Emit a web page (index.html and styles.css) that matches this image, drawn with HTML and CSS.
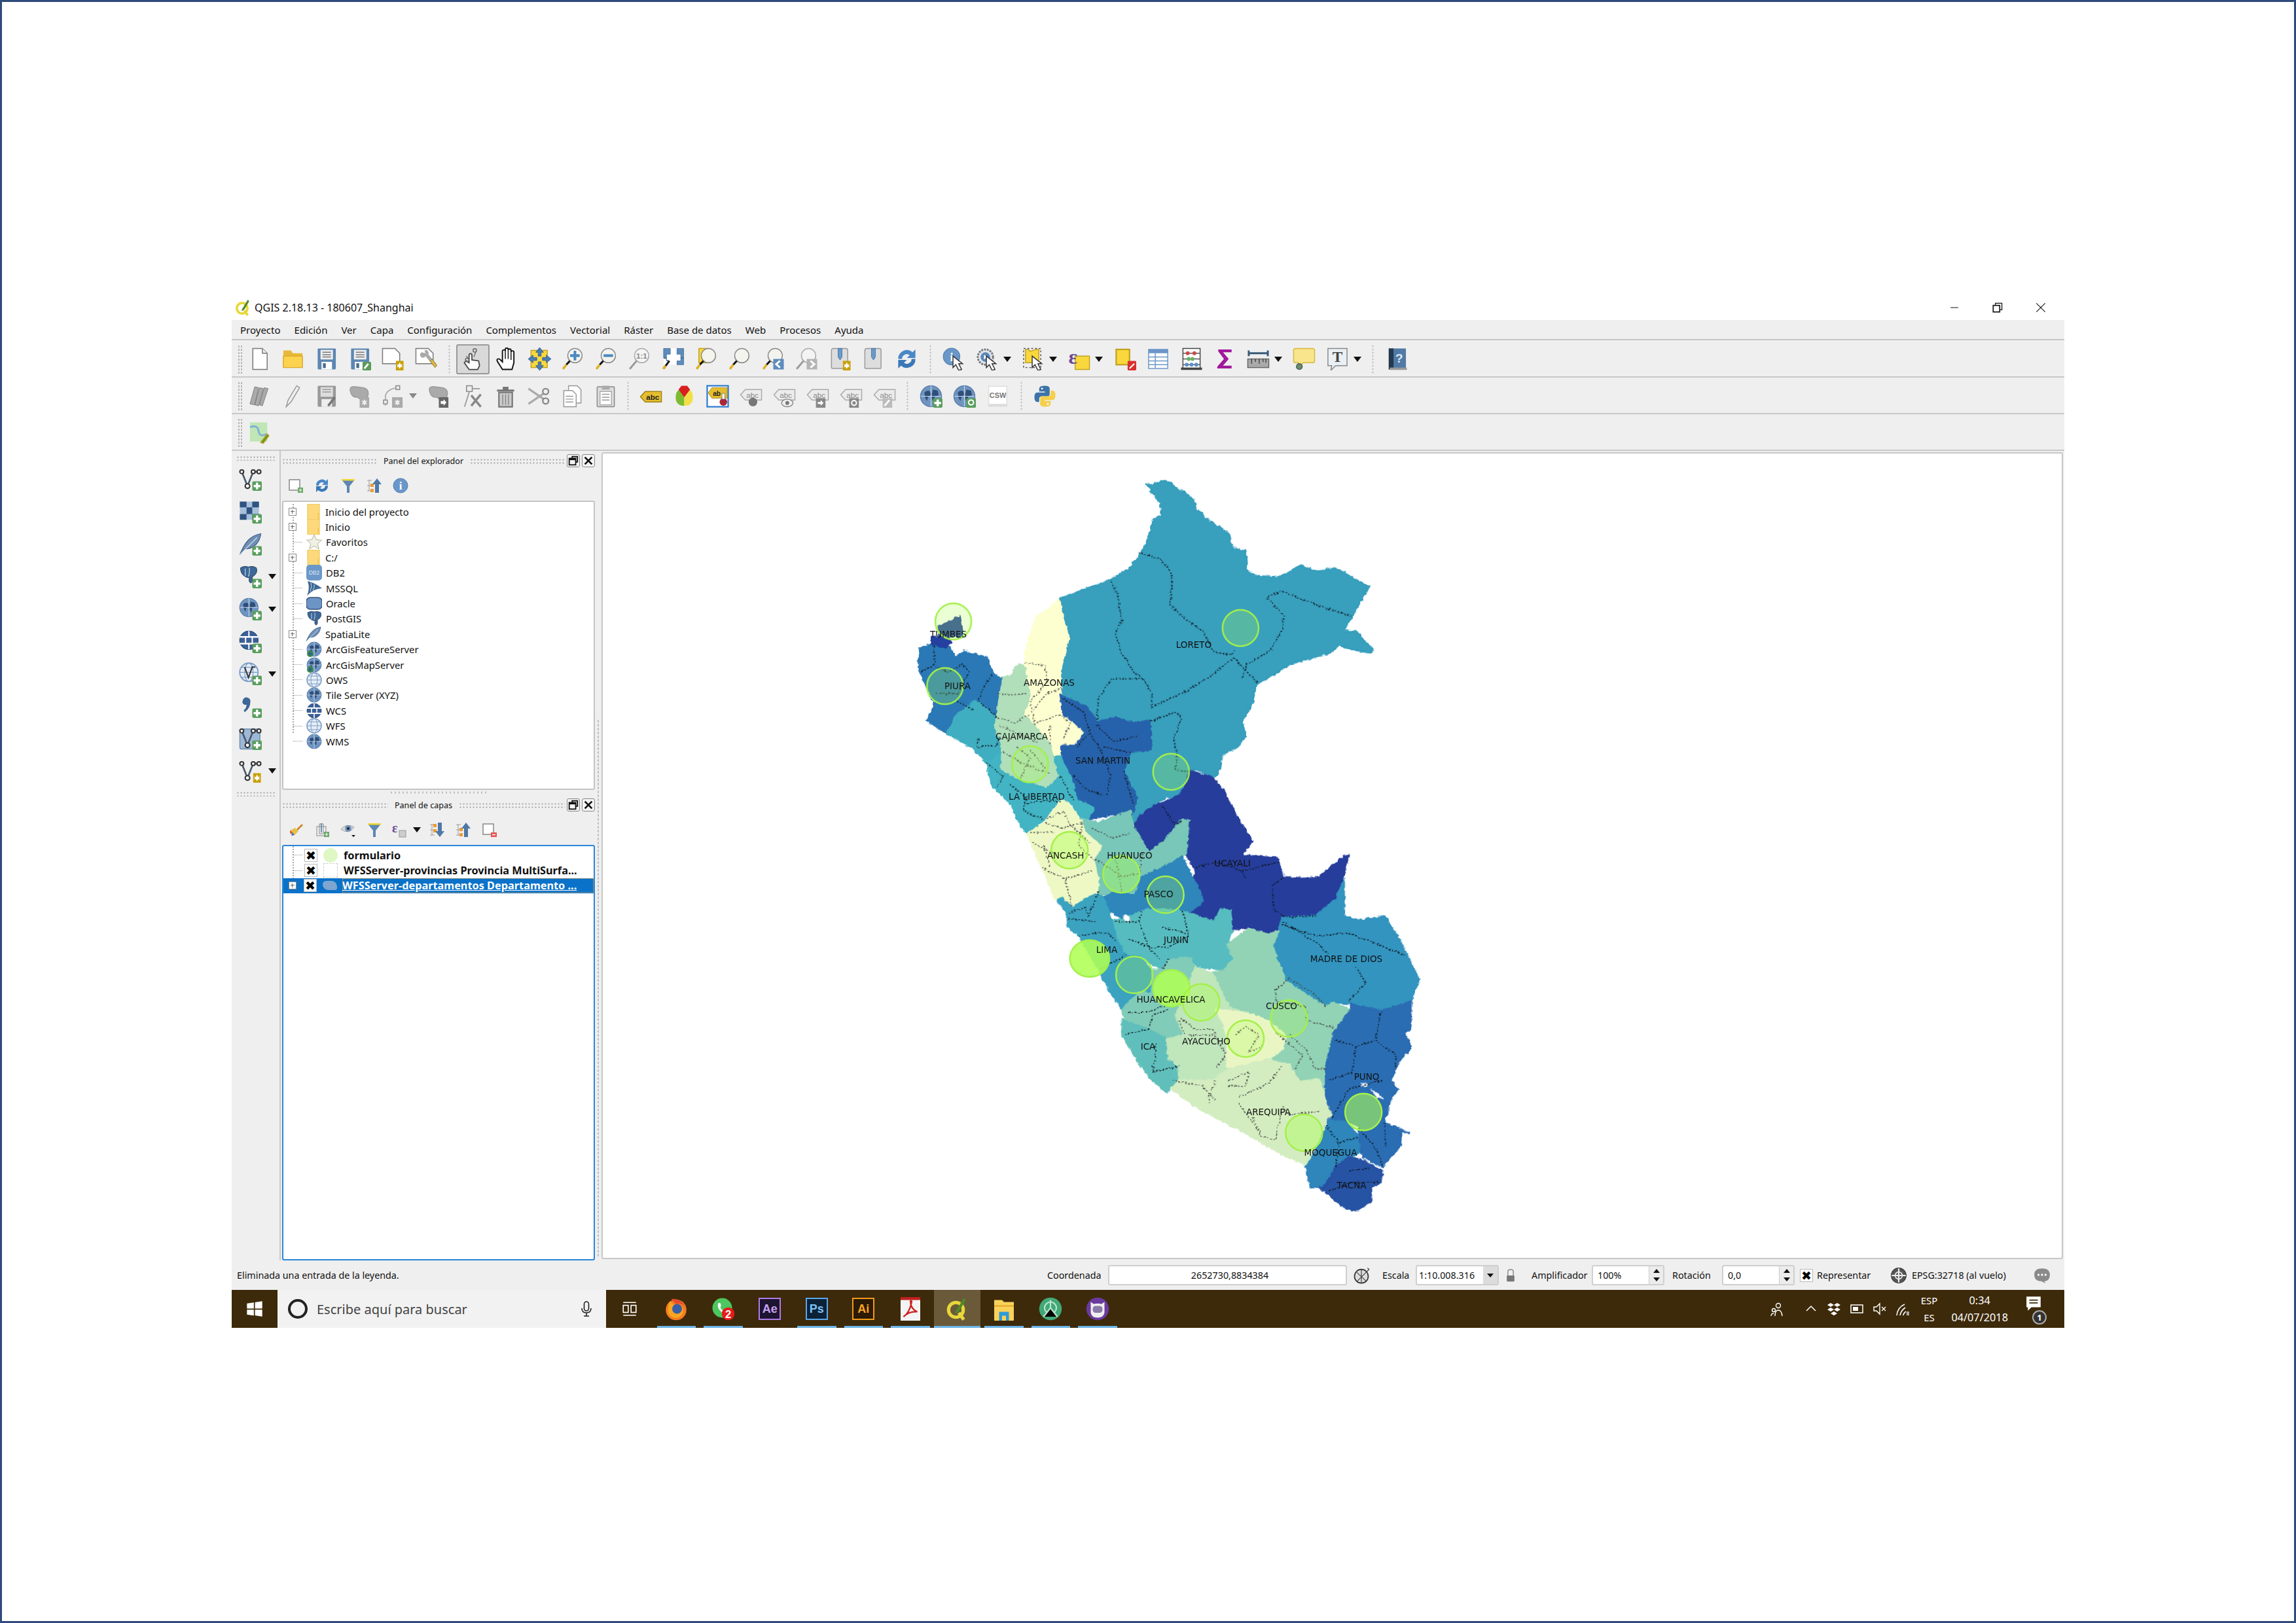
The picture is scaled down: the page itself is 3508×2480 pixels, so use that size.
FILE: index.html

```html
<!DOCTYPE html>
<html lang="es">
<head>
  <meta charset="UTF-8">
  <title>QGIS 2.18.13 - 180607_Shanghai</title>
  <link rel="stylesheet" href="styles.css">
</head>
<body>

<svg class="sprite" xmlns="http://www.w3.org/2000/svg">
  <defs>
    <!-- shared parts -->
    <symbol id="p-plus" viewBox="0 0 24 24"><rect x="14" y="14" width="10" height="10" rx="1.5" fill="#5a9e5e"/><path d="M19 15.5v7M15.5 19h7" stroke="#fff" stroke-width="2.4"/></symbol>
    <symbol id="p-star" viewBox="0 0 24 24"><rect x="15" y="14" width="8" height="10" fill="#c9a008"/><path d="M19 15.5l1.2 2.5 2-.5-1.2 1.5 1.2 1.7-2-.5-1.200 2.300-1.200-2.300-2 .5 1.200-1.700-1.200-1.500 2 .5z" fill="#fff"/></symbol>
    <symbol id="p-mag" viewBox="0 0 24 24"><circle cx="14" cy="8.500" r="7.500" fill="#f4f4ee" stroke="#8a8a8a"/><path d="M8.700 14 L5 18" stroke="#111" stroke-width="2"/><path d="M5 18 L1.500 22.500" stroke="#e0b020" stroke-width="2.400"/></symbol>
    <symbol id="p-magg" viewBox="0 0 24 24"><circle cx="14" cy="8.500" r="7.500" fill="#f4f4f4" stroke="#aaa"/><path d="M8.700 14 L1.500 22.500" stroke="#999" stroke-width="2"/></symbol>
    <symbol id="p-globe" viewBox="0 0 24 24"><circle cx="12" cy="12" r="11" fill="#6f94c0" stroke="#5a7fad"/><path d="M5 8q3-3 6-1l1 4-3 1-1 5-2-3zM14 5l5 1 1 5-4 1-1 6-2-3v-5z" fill="#2f4f78"/><path d="M1.500 12h21M12 1v22" stroke="#c8d8ec" stroke-width=".8"/></symbol>
    <symbol id="p-globel" viewBox="0 0 24 24"><circle cx="12" cy="12" r="11" fill="#e4edf7" stroke="#7c9cc4" stroke-width="1.500"/><ellipse cx="12" cy="12" rx="5" ry="11" fill="none" stroke="#7c9cc4"/><path d="M1 12h22M3 6h18M3 18h18" stroke="#7c9cc4"/></symbol>
    <symbol id="p-globed" viewBox="0 0 24 24"><circle cx="12" cy="12" r="11" fill="#3c6096" stroke="#2c4c7c"/><path d="M1 8h22M1 16h22" stroke="#fff" stroke-width="2"/><path d="M8 8v8M16 8v8M12 1v7M12 16v7" stroke="#fff" stroke-width="1.600"/></symbol>
    <symbol id="p-v" viewBox="0 0 24 24"><path d="M3 4l6 15 6-15h7" fill="none" stroke="#4a5a6a" stroke-width="1.800"/><g fill="#fff" stroke="#333" stroke-width="1.400"><circle cx="3" cy="4" r="2"/><circle cx="9" cy="19" r="2.400"/><circle cx="15" cy="4" r="2"/><circle cx="21" cy="4" r="2"/></g></symbol>
    <symbol id="p-feather" viewBox="0 0 24 24"><path d="M1 23C6 10 12 3 23 1 22 9 17 17 6 17L1 23z" fill="#6f8fb5" stroke="#3c5f8a" stroke-width=".8"/><path d="M1 23L19 5" stroke="#dfe8f2" stroke-width=".8"/></symbol>
    <symbol id="p-pg" viewBox="0 0 24 24"><path d="M2 3q5-3 10-1 5-2 10 1 2 6-3 10l-2 1v6q-2 4-4 0v-5q-2 1-5-1-6-3-6-11z" fill="#3d6796" stroke="#243f60" stroke-width=".8"/><path d="M8 4v9M13 3q1 5-1 11" stroke="#c3d5e8" fill="none"/></symbol>
    <symbol id="p-abc" viewBox="0 0 24 24"><path d="M6 7h17v11H6L1 12.500z" fill="#e6bd2e" stroke="#a08214"/><text x="7" y="15.500" class="svg-b" font-size="8" fill="#222">abc</text></symbol>
    <symbol id="p-abcg" viewBox="0 0 24 24"><path d="M6 5h17v11H6L1 10.500z" fill="#ececec" stroke="#aaa"/><text x="7" y="13.500" class="svg-t" font-size="8" fill="#888">abc</text></symbol>
    <symbol id="p-doc" viewBox="0 0 24 24"><path d="M5 1h10l5 5v17H5z" fill="#fff" stroke="#777"/><path d="M15 1v5h5" fill="#eee" stroke="#777"/></symbol>

    <!-- toolbar one -->
    <symbol id="i-new" viewBox="0 0 24 24"><use href="#p-doc"/></symbol>
    <symbol id="i-open" viewBox="0 0 24 24"><path d="M2 6V3h8l2 3h10v4H2z" fill="#e8b838"/><path d="M2 21V9h20v12z" fill="#fbd34f" stroke="#dba82a"/></symbol>
    <symbol id="i-save" viewBox="0 0 24 24"><rect x="3" y="1" width="19" height="22" rx="1" fill="#5d86b2"/><rect x="6" y="2.500" width="13" height="10" fill="#eee"/><path d="M8 5h9M8 7.500h9M8 10h9" stroke="#777"/><rect x="7" y="15" width="11" height="8" fill="#fff"/><rect x="8.500" y="16.500" width="3" height="5" fill="#4a6a90"/></symbol>
    <symbol id="i-saveas" viewBox="0 0 24 24"><use href="#i-save"/><rect x="15" y="15" width="9" height="9" rx="1" fill="#5a9a5a"/><path d="M17 22l4-5" stroke="#fff" stroke-width="2"/></symbol>
    <symbol id="i-newcomp" viewBox="0 0 24 24"><path d="M1 1h13l5 5v11H1z" fill="#fff" stroke="#777"/><use href="#p-star"/></symbol>
    <symbol id="i-compmgr" viewBox="0 0 24 24"><path d="M1 1h13l5 5v11H1z" fill="#fff" stroke="#777"/><path d="M7 5a3 3 0 1 0 4 4l9 11 3-2-9-11a3 3 0 0 0-4-4l1 3z" fill="#aaa"/><path d="M16 14l5 7 2-2-5-7z" fill="#e0ba40" stroke="#8a7020" stroke-width=".6"/></symbol>
    <symbol id="i-touch" viewBox="0 0 24 24"><path d="M8 23l-5-7 2-2 3 2V8a1.500 1.500 0 0 1 3 0v5l7 1 1 5-2 4z" fill="#fff" stroke="#444" stroke-width="1.200"/><circle cx="6" cy="13" r="1.800" fill="none" stroke="#666"/><circle cx="14" cy="3" r="1.800" fill="none" stroke="#666"/><path d="M15 5l-2 5M7 11L5 9" stroke="#777"/></symbol>
    <symbol id="i-pan" viewBox="0 0 24 24"><path d="M8 23l-5-8c-2-3 1-4 3-2l2 2V4a1.400 1.400 0 0 1 3 0V2a1.400 1.400 0 0 1 3 0v1a1.400 1.400 0 0 1 3 0v2a1.400 1.400 0 0 1 3 0v11l-2 7z" fill="#fff" stroke="#111" stroke-width="1.300"/><path d="M11 4v8M14 3v9M17 5v8" stroke="#111"/></symbol>
    <symbol id="i-pansel" viewBox="0 0 24 24"><rect x="3" y="3" width="17" height="18" fill="#f8d83c" stroke="#c3a020"/><g fill="#4a7fb5" stroke="#2d5a8c" stroke-width=".6"><path d="M12 0l4 5h-2.500v4h-3V5H8zM12 24l4-5h-2.500v-4h-3v4H8zM0 12l5-4v2.500h4v3H5V16zM24 12l-5-4v2.500h-4v3h4V16z"/></g></symbol>
    <symbol id="i-zin" viewBox="0 0 24 24"><use href="#p-mag"/><path d="M14 3.500v10M9 8.500h10" stroke="#4a88c0" stroke-width="2.800"/></symbol>
    <symbol id="i-zout" viewBox="0 0 24 24"><use href="#p-mag"/><path d="M9 8.500h10" stroke="#4a88c0" stroke-width="2.800"/></symbol>
    <symbol id="i-z11" viewBox="0 0 24 24"><use href="#p-magg"/><text x="14" y="11.500" text-anchor="middle" class="svg-b" font-size="8" fill="#888">1:1</text></symbol>
    <symbol id="i-zfull" viewBox="0 0 24 24"><rect x="2" y="1" width="21" height="17" fill="#fff"/><path d="M2 1h7v6H5v4H2zM23 1h-7v6h4v4h3zM23 18h-7v-4h4v-3h3zM2 11h3v3h3" fill="#5d8cbc" stroke="#38618c" stroke-width=".5"/><path d="M8 14L2 22" stroke="#111" stroke-width="2"/><path d="M4 19L1.500 22.500" stroke="#e0b020" stroke-width="2.400"/></symbol>
    <symbol id="i-zsel" viewBox="0 0 24 24"><rect x="4" y="1" width="10" height="15" fill="#f8d83c" stroke="#c3a020"/><use href="#p-mag"/></symbol>
    <symbol id="i-zlayer" viewBox="0 0 24 24"><use href="#p-mag"/></symbol>
    <symbol id="i-zlast" viewBox="0 0 24 24"><use href="#p-mag"/><rect x="12" y="12" width="11" height="11" fill="#5d8cbc"/><path d="M19 14l-4 3.500 4 3.500" fill="none" stroke="#fff" stroke-width="2"/></symbol>
    <symbol id="i-znext" viewBox="0 0 24 24"><use href="#p-magg"/><rect x="12" y="12" width="11" height="11" fill="#b4b4b4"/><path d="M16 14l4 3.500-4 3.500" fill="none" stroke="#fff" stroke-width="2"/></symbol>
    <symbol id="i-bmnew" viewBox="0 0 24 24"><use href="#i-bm"/><use href="#p-star"/></symbol>
    <symbol id="i-bm" viewBox="0 0 24 24"><path d="M3 3q0-2 2-2h13q2 0 2 2v18q0 1-2 1H5q-2 0-2-1z" fill="#ddd" stroke="#999"/><path d="M10 1h4v9l-2 3-2-3z" fill="#6a9bcc" stroke="#3c6e9e" stroke-width=".6"/></symbol>
    <symbol id="i-refresh" viewBox="0 0 24 24"><path d="M3 12a9 9 0 0 1 15-7l3-3v9h-9l3-3a5 5 0 0 0-8 4z" fill="#4a88c7"/><path d="M21 12a9 9 0 0 1-15 7l-3 3v-9h9l-3 3a5 5 0 0 0 8-4z" fill="#3a78b8"/></symbol>
    <symbol id="i-info" viewBox="0 0 24 24"><circle cx="12" cy="12" r="11" fill="#6a97c9" stroke="#5380b0"/><text x="12" y="18" text-anchor="middle" class="svg-serif" font-size="17" fill="#fff">i</text></symbol>
    <symbol id="p-cursor" viewBox="0 0 24 24"><path d="M11 9v12l3-3 3 6 3-1-3-6h4z" fill="#fff" stroke="#333" stroke-width="1"/></symbol>
    <symbol id="i-ident" viewBox="0 0 24 24"><svg width="19" height="19" viewBox="0 0 24 24"><use href="#i-info"/></svg><use href="#p-cursor"/></symbol>
    <symbol id="i-action" viewBox="0 0 24 24"><circle cx="10" cy="10" r="8" fill="#dfe6ef" stroke="#777" stroke-width="2" stroke-dasharray="2 1"/><circle cx="10" cy="10" r="5" fill="#5a86b6"/><path d="M8.500 7.500l4 2.500-4 2.500z" fill="#fff"/><use href="#p-cursor"/></symbol>
    <symbol id="i-select" viewBox="0 0 24 24"><path d="M4 2h3l2 2 6-2h3v14H4z" fill="#f8d83c" stroke="#c3a020"/><path d="M2 1h18v20H2z" fill="none" stroke="#555" stroke-dasharray="2 2"/><use href="#p-cursor"/></symbol>
    <symbol id="i-expr" viewBox="0 0 24 24"><rect x="8" y="9" width="15" height="14" fill="#f8d83c" stroke="#c3a020"/><text x="1" y="17" class="svg-serif" font-size="22" fill="#6c4a96">ε</text></symbol>
    <symbol id="i-desel" viewBox="0 0 24 24"><rect x="3" y="2" width="14" height="16" fill="#f8d83c" stroke="#c3a020" stroke-width="1.500"/><rect x="15" y="14" width="9" height="10" rx="1" fill="#d83030"/><path d="M17 22l5-5" stroke="#fff" stroke-width="1.400"/></symbol>
    <symbol id="i-table" viewBox="0 0 24 24"><rect x="2" y="2" width="20" height="20" fill="#fff" stroke="#6a96c8"/><rect x="2" y="2" width="20" height="4" fill="#6a96c8"/><path d="M2 10h20M2 14h20M2 18h20M9 6v16" stroke="#6a96c8"/></symbol>
    <symbol id="i-calc" viewBox="0 0 24 24"><rect x="3" y="1" width="18" height="21" fill="#fff" stroke="#444"/><rect x="1" y="21" width="22" height="2.500" fill="#444"/><path d="M3 6h18M3 12h18M3 18h18" stroke="#555"/><g fill="#d04848"><circle cx="8" cy="6" r="2"/><circle cx="15" cy="6" r="2"/></g><g fill="#68b068"><circle cx="9" cy="12" r="2"/><circle cx="13" cy="12" r="2"/></g><g fill="#5c90c8"><circle cx="7" cy="18" r="2"/><circle cx="12" cy="18" r="2"/><circle cx="17" cy="18" r="2"/></g></symbol>
    <symbol id="i-sigma" viewBox="0 0 24 24"><path d="M5 2h14v3H10l6 7-6 7h9v3H4v-2l7-8-6-8z" fill="#a0189c"/></symbol>
    <symbol id="i-measure" viewBox="0 0 24 24"><path d="M2 6h20M2 3v6M22 3v6" stroke="#3a5a78" stroke-width="2"/><rect x="1" y="12" width="22" height="9" fill="#aaa" stroke="#666"/><path d="M5 12v5M9 12v3M13 12v5M17 12v3M20 12v4" stroke="#444"/></symbol>
    <symbol id="i-tip" viewBox="0 0 24 24"><path d="M3 1h18q2 0 2 2v11q0 2-2 2H11l-4 5-1-5H3q-2 0-2-2V3q0-2 2-2z" fill="#f8e58c" stroke="#d8b840"/><circle cx="7" cy="20" r="3" fill="#6a9060" stroke="#456"/></symbol>
    <symbol id="i-text" viewBox="0 0 24 24"><path d="M2 1h20v18H10l-5 5 1-5H2z" fill="#eaf0f4" stroke="#888"/><text x="12" y="15" text-anchor="middle" class="svg-serif" font-size="16" font-weight="700" fill="#444">T</text></symbol>
    <symbol id="i-help" viewBox="0 0 24 24"><rect x="4" y="1" width="18" height="22" fill="#4f7aa6"/><rect x="4" y="1" width="5" height="22" fill="#24384e"/><rect x="5" y="21" width="18" height="2.500" fill="#999"/><text x="15" y="16" text-anchor="middle" class="svg-b" font-size="13" fill="#dfe8f2">?</text></symbol>

    <!-- toolbar two -->
    <symbol id="i-pencils" viewBox="0 0 24 24"><g fill="#aaa" stroke="#777" stroke-width=".6"><path d="M2 20L7 2l4 1-4 18zM7 21L12 3l4 1-5 18zM12 21L17 3l4 1-6 18z"/></g></symbol>
    <symbol id="i-pencil" viewBox="0 0 24 24"><path d="M5 23l2-7L16 1l3 2-9 15z" fill="#eee" stroke="#999"/></symbol>
    <symbol id="i-savegray" viewBox="0 0 24 24"><rect x="3" y="1" width="19" height="22" rx="1" fill="#999"/><rect x="6" y="2.500" width="13" height="10" fill="#ddd"/><path d="M8 5h9M8 7.500h9" stroke="#999"/><rect x="7" y="15" width="11" height="8" fill="#eee"/><path d="M14 22l7-9" stroke="#777" stroke-width="2.500"/></symbol>
    <symbol id="p-blob" viewBox="0 0 24 24"><path d="M2 5q0-4 6-3l8 1q5 1 5 6 0 4-3 6-6 1-8-2-7 1-8-8z" fill="#aaa" stroke="#999"/></symbol>
    <symbol id="i-addfeat" viewBox="0 0 24 24"><use href="#p-blob"/><rect x="12" y="13" width="10" height="11" fill="#aaa"/><path d="M17 15l1 2 2-.5-1.400 2 1.400 2-2-.5-1 2-1-2-2 .5 1.400-2-1.400-2 2 .5z" fill="#eee"/></symbol>
    <symbol id="i-movefeat" viewBox="0 0 24 24"><use href="#p-blob"/><rect x="12" y="13" width="10" height="11" fill="#666"/><path d="M14 17h3v-2l3 3.500-3 3.500v-2h-3z" fill="#fff"/></symbol>
    <symbol id="i-nodeadd" viewBox="0 0 24 24"><path d="M4 22V12Q5 5 16 3" fill="none" stroke="#aaa" stroke-width="1.200"/><g fill="#eee" stroke="#888"><rect x="2" y="16" width="4" height="4"/><rect x="15" y="1" width="4" height="4"/></g><rect x="11" y="13" width="11" height="11" fill="#aaa"/><path d="M16.500 15l1 2 2-.5-1.400 2 1.400 2-2-.5-1 2-1-2-2 .5 1.400-2-1.400-2 2 .5z" fill="#eee"/></symbol>
    <symbol id="i-nodetool" viewBox="0 0 24 24"><rect x="6" y="1" width="6" height="6" fill="#eee" stroke="#888"/><path d="M12 4h8M9 7L4 23" stroke="#999" stroke-width="1.200"/><path d="M11 11l10 12M21 10L11 22" stroke="#888" stroke-width="2.400"/></symbol>
    <symbol id="i-trash" viewBox="0 0 24 24"><path d="M3 5h18v2H3zM9 2h6v3H9z" fill="#777"/><path d="M5 8h14v15H5z" fill="#ccc" stroke="#777" stroke-width="1.500"/><path d="M9 10v11M12 10v11M15 10v11" stroke="#888"/></symbol>
    <symbol id="i-scissors" viewBox="0 0 24 24"><path d="M1 4l16 11M1 20L17 9" stroke="#aaa" stroke-width="2.200"/><circle cx="19" cy="7" r="3" fill="none" stroke="#888" stroke-width="1.600"/><circle cx="19" cy="17" r="3" fill="none" stroke="#888" stroke-width="1.600"/></symbol>
    <symbol id="i-copy" viewBox="0 0 24 24"><path d="M8 1h9l4 4v14H8z" fill="#fff" stroke="#999"/><path d="M3 6h9l4 4v13H3z" fill="#fff" stroke="#999"/><path d="M5 12h8M5 15h8M5 18h8" stroke="#999"/></symbol>
    <symbol id="i-paste" viewBox="0 0 24 24"><rect x="3" y="2" width="18" height="21" rx="1" fill="#ddd" stroke="#888"/><rect x="8" y="1" width="8" height="4" fill="#aaa"/><rect x="6" y="7" width="12" height="14" fill="#fff" stroke="#aaa"/><path d="M8 10h8M8 13h8M8 16h8" stroke="#999"/></symbol>
    <symbol id="i-abc" viewBox="0 0 24 24"><use href="#p-abc"/></symbol>
    <symbol id="i-pie" viewBox="0 0 24 24"><path d="M12 13V22Q3 22 3 13 3 7 7 5z" fill="#7cbc30"/><path d="M12 13V22Q21 22 21 13 21 7 17 5z" fill="#f4de48"/><path d="M12 13L6 5 9 1h6l3 4z" fill="#d82020"/></symbol>
    <symbol id="i-abcsel" viewBox="0 0 24 24"><rect x="1" y="1" width="22" height="22" fill="#fff" stroke="#2a7ad0" stroke-width="1.500"/><path d="M6 3h16v11H6l-4-5.500z" fill="#e6bd2e" stroke="#a08214" stroke-width=".6"/><text x="7" y="11.500" class="svg-b" font-size="7" fill="#222">ab</text><circle cx="18" cy="18" r="4" fill="#a82838"/><rect x="16.500" y="9" width="3" height="6" fill="#fff" stroke="#666" stroke-width=".5"/></symbol>
    <symbol id="i-abcpin" viewBox="0 0 24 24"><use href="#p-abcg"/><circle cx="14" cy="18" r="4.500" fill="#777"/></symbol>
    <symbol id="i-abceye" viewBox="0 0 24 24"><use href="#p-abcg"/><ellipse cx="15" cy="19" rx="6" ry="4" fill="#eee" stroke="#888"/><circle cx="15" cy="19" r="2" fill="#777"/></symbol>
    <symbol id="i-abcmove" viewBox="0 0 24 24"><use href="#p-abcg"/><rect x="10" y="14" width="10" height="10" fill="#888"/><path d="M12 18h3v-2l3 3-3 3v-2h-3z" fill="#fff"/></symbol>
    <symbol id="i-abcrot" viewBox="0 0 24 24"><use href="#p-abcg"/><rect x="10" y="14" width="10" height="10" fill="#888"/><circle cx="15" cy="19" r="2.500" fill="none" stroke="#fff" stroke-width="1.400"/></symbol>
    <symbol id="i-abcedit" viewBox="0 0 24 24"><use href="#p-abcg"/><rect x="10" y="14" width="10" height="10" fill="#bbb"/><path d="M12 22l5-6" stroke="#fff" stroke-width="2"/></symbol>
    <symbol id="i-globeadd" viewBox="0 0 24 24"><use href="#p-globe"/><use href="#p-plus"/></symbol>
    <symbol id="i-globesrc" viewBox="0 0 24 24"><use href="#p-globe"/><rect x="14" y="14" width="10" height="10" rx="1" fill="#5a9e5e"/><circle cx="19" cy="18.500" r="2.600" fill="none" stroke="#fff" stroke-width="1.400"/></symbol>
    <symbol id="i-csw" viewBox="0 0 24 24"><rect x="2" y="1" width="20" height="22" fill="#ddd"/><rect x="3" y="2" width="18" height="18" fill="#fff"/><text x="12" y="14" text-anchor="middle" class="svg-b" font-size="7.500" fill="#777">CSW</text></symbol>
    <symbol id="i-python" viewBox="0 0 24 24"><path d="M12 1q-6 0-6 3v3h6v1H4q-3 0-3 5t3 5h2v-3q0-3 3-3h6q2 0 2-3V4q0-3-5-3z" fill="#3d74a8"/><path d="M12 23q6 0 6-3v-3h-6v-1h8q3 0 3-5t-3-5h-2v3q0 3-3 3H9q-2 0-2 3v5q0 3 5 3z" fill="#f5cf4a"/><circle cx="9" cy="4" r="1" fill="#fff"/><circle cx="15" cy="20" r="1" fill="#fff"/></symbol>
    <symbol id="i-mapnew" viewBox="0 0 24 24"><rect x="2" y="1" width="18" height="20" fill="#bfe6b4"/><path d="M2 6q8-3 9 4t9 3" fill="none" stroke="#7fb0d8" stroke-width="2"/><path d="M13 22l7-9 2 2-6 8z" fill="#6c9a28" stroke="#c8a020" stroke-width=".8"/></symbol>

    <!-- left toolbar -->
    <symbol id="l-v" viewBox="0 0 24 24"><use href="#p-v"/><use href="#p-plus"/></symbol>
    <symbol id="l-r" viewBox="0 0 24 24"><rect x="1" y="1" width="20" height="19" fill="#a8c0dc"/><path d="M1 1h7v6H1zM14 1h7v6h-7zM8 7h6v7H8zM1 14h7v6H1zM14 14h7v6h-7z" fill="#2f5380"/><use href="#p-plus"/></symbol>
    <symbol id="l-f" viewBox="0 0 24 24"><use href="#p-feather"/><use href="#p-plus"/></symbol>
    <symbol id="l-pg" viewBox="0 0 24 24"><svg width="20" height="20" viewBox="0 0 24 24"><use href="#p-pg"/></svg><use href="#p-plus"/></symbol>
    <symbol id="l-wms" viewBox="0 0 24 24"><svg width="21" height="21" viewBox="0 0 24 24"><use href="#p-globe"/></svg><use href="#p-plus"/></symbol>
    <symbol id="l-wcs" viewBox="0 0 24 24"><svg width="21" height="21" viewBox="0 0 24 24"><use href="#p-globed"/></svg><use href="#p-plus"/></symbol>
    <symbol id="l-wfs" viewBox="0 0 24 24"><svg width="21" height="21" viewBox="0 0 24 24"><use href="#p-globel"/></svg><path d="M6 5l4 11 4-11h3" fill="none" stroke="#333" stroke-width="1.400"/><use href="#p-plus"/></symbol>
    <symbol id="l-txt" viewBox="0 0 24 24"><path d="M4 6a4 4 0 1 1 8 1q0 7-6 11l-1-2q3-2 3-6a3 3 0 0 1-4-4z" fill="#3d6796"/><use href="#p-plus"/></symbol>
    <symbol id="l-virt" viewBox="0 0 24 24"><rect x="1" y="2" width="21" height="21" rx="2" fill="#9db8d6" stroke="#6c8cb0"/><use href="#p-v"/><use href="#p-plus"/></symbol>
    <symbol id="l-vnew" viewBox="0 0 24 24"><use href="#p-v"/><use href="#p-star"/></symbol>

    <!-- panels -->
    <symbol id="b-add" viewBox="0 0 24 24"><rect x="2" y="3" width="16" height="16" fill="#fff" stroke="#888" stroke-width="1.500"/><rect x="15" y="15" width="8" height="8" fill="#6aa86a"/><path d="M19 16.500v5M16.500 19h5" stroke="#fff"/></symbol>
    <symbol id="b-rem" viewBox="0 0 24 24"><rect x="2" y="3" width="16" height="16" fill="#fff" stroke="#888" stroke-width="1.500"/><rect x="14" y="16" width="9" height="7" fill="#e85050"/><path d="M16 19.500h5" stroke="#fff" stroke-width="1.500"/></symbol>
    <symbol id="b-filter" viewBox="0 0 24 24"><path d="M2 3h20l-8 10v10h-4V13z" fill="#5d86b2"/><rect x="2" y="2" width="20" height="2.500" fill="#f0d830"/></symbol>
    <symbol id="b-collapse" viewBox="0 0 24 24"><path d="M1 4h7M1 12h7M1 20h7M4 4v16" stroke="#999"/><rect x="6" y="9" width="5" height="5" fill="#f09a30"/><rect x="6" y="17" width="5" height="5" fill="#f09a30"/><path d="M16 1l7 9h-4v13h-6V10H9z" fill="#4f78a6"/></symbol>
    <symbol id="b-expand" viewBox="0 0 24 24"><path d="M1 4h7M1 12h7M1 20h7M4 4v16" stroke="#999"/><rect x="6" y="3" width="5" height="5" fill="#f09a30"/><rect x="6" y="11" width="5" height="5" fill="#f09a30"/><path d="M16 23l7-9h-4V1h-6v13H9z" fill="#4f78a6"/></symbol>
    <symbol id="b-brush" viewBox="0 0 24 24"><path d="M13 11l8-8 2 2-8 8z" fill="#d08a28"/><path d="M3 13l8-4 5 5-6 6-7-4z" fill="#e6c04a"/><path d="M3 13l4 3-3 3z" fill="#d84040"/><path d="M7 16l3 4-5 1z" fill="#3c6cb0"/></symbol>
    <symbol id="b-group" viewBox="0 0 24 24"><rect x="4" y="7" width="14" height="14" fill="#eee" stroke="#888"/><path d="M8 3h6v15H8z" fill="none" stroke="#888"/><path d="M11 2v14" stroke="#4a78a8" stroke-width="1.500"/><rect x="15" y="15" width="8" height="8" fill="#6aa86a"/><path d="M19 16.500v5M16.500 19h5" stroke="#fff"/></symbol>
    <symbol id="b-eye" viewBox="0 0 24 24"><path d="M1 11Q10 1 21 8q-8 12-20 3z" fill="#ddd" stroke="#999"/><circle cx="12" cy="10" r="5" fill="#6f93bf"/><circle cx="12" cy="10" r="2" fill="#222"/><path d="M17 20h6l-3 3z" fill="#111"/></symbol>
    <symbol id="b-exprg" viewBox="0 0 24 24"><rect x="12" y="13" width="10" height="10" fill="#ccc" stroke="#999"/><text x="1" y="16" class="svg-serif" font-size="20" fill="#6c4a96">ε</text></symbol>

    <!-- tree icons -->
    <symbol id="t-folder" viewBox="0 0 24 24"><path d="M3 0h18v24H3z" fill="#fdd97c" stroke="#e8c050"/><path d="M18 14h3v10h-3z" fill="#f8cc58"/></symbol>
    <symbol id="t-star" viewBox="0 0 24 24"><path d="M12 1l3.400 7.500 8 .8-6 5.400 1.800 8-7.200-4.200-7.200 4.200 1.800-8-6-5.400 8-.8z" fill="#efefe2" stroke="#b8b8a0"/></symbol>
    <symbol id="t-db2" viewBox="0 0 24 24"><rect x="0" y="0" width="24" height="24" rx="5" fill="#6c98c8"/><text x="12" y="14.500" text-anchor="middle" class="svg-t" font-size="8.500" fill="#dce8f4">DB2</text></symbol>
    <symbol id="t-mssql" viewBox="0 0 24 24"><path d="M1 23Q6 12 2 1q12 3 22 11-12 0-23 11z" fill="#3d6796"/><path d="M7 3q2 6-1 14M12 6q1 5-2 9" stroke="#c9d8e8" fill="none"/></symbol>
    <symbol id="t-oracle" viewBox="0 0 24 24"><rect x="0" y="3" width="24" height="18" rx="6" fill="#6c94c4" stroke="#34547c" stroke-width="1.500"/></symbol>
    <symbol id="t-arc" viewBox="0 0 24 24"><use href="#p-globe"/><circle cx="6" cy="19" r="5" fill="#3a8a4a"/><circle cx="6" cy="19" r="2.400" fill="#2d5f9c"/></symbol>

    <!-- taskbar -->
    <symbol id="w-firefox" viewBox="0 0 24 24"><circle cx="12" cy="13" r="10.500" fill="#f57c20"/><path d="M6 4q3 5 9 4 5 2 4 8-3 6-9 5-7-2-6-9 0-5 2-8z" fill="#f9a620"/><circle cx="13" cy="12" r="5" fill="#3a5ea8"/><path d="M7 2q10-1 14 8-4-5-9-3z" fill="#e54a2e"/></symbol>
    <symbol id="w-whats" viewBox="0 0 24 24"><circle cx="11" cy="11" r="10" fill="#4cc65e"/><path d="M7 6q-2 5 4 10 4 2 6-1l-3-2-2 1q-2-1-3-4l1-1-1-3z" fill="#fff"/><circle cx="17" cy="17" r="6.500" fill="#e81a1a"/><text x="17" y="21" text-anchor="middle" class="svg-b" font-size="11" fill="#fff">2</text></symbol>
    <symbol id="w-acrobat" viewBox="0 0 24 24"><rect x="2" y="0" width="20" height="24" fill="#f4f4f4"/><rect x="2" y="0" width="20" height="3" fill="#c02020"/><path d="M5 20q6-4 8-14 1-3-1-2 0 8 7 11-8-1-14 5z" fill="none" stroke="#d02020" stroke-width="1.500"/></symbol>
    <symbol id="w-qgis" viewBox="0 0 24 24"><circle cx="11" cy="13" r="7.500" fill="none" stroke="#e8d83a" stroke-width="3.400"/><path d="M14 16l5 7" stroke="#e8d83a" stroke-width="3.400"/><path d="M11 14L19 1l2 2-7 12-4 2z" fill="#4e8a24"/></symbol>
    <symbol id="w-folder" viewBox="0 0 24 24"><path d="M2 3h8l2 2h10v19H2z" fill="#fad25a"/><path d="M2 8h20v2H2z" fill="#e8b53a"/><rect x="7" y="15" width="10" height="9" fill="#2e9ad8"/><rect x="10" y="19" width="4" height="5" fill="#fad25a"/></symbol>
    <symbol id="w-green" viewBox="0 0 24 24"><circle cx="12" cy="12" r="11.500" fill="#42a878"/><circle cx="12" cy="11" r="6" fill="none" stroke="#bfe8d0" stroke-width="1.400"/><path d="M5 20l7-9 7 9M12 3v8" stroke="#bfe8d0" stroke-width="1.400"/></symbol>
    <symbol id="w-purple" viewBox="0 0 24 24"><circle cx="12" cy="12" r="11.500" fill="#6a3a9e"/><path d="M5 5l3 2q4-1 8 0l3-2v11q-1 5-7 5t-7-5z" fill="#efefef"/><rect x="7" y="9" width="10" height="7" rx="3" fill="#8a7aa8"/></symbol>
    <symbol id="w-crs" viewBox="0 0 24 24"><circle cx="12" cy="12" r="10.500" fill="#555" stroke="#333"/><path d="M2 12h20M12 2v20" stroke="#eee" stroke-width="2"/><circle cx="12" cy="12" r="5" fill="none" stroke="#eee" stroke-width="1.500"/></symbol>
    <symbol id="w-msg" viewBox="0 0 24 24"><path d="M12 2q11 0 11 9t-8 9l2 3-6-3Q1 20 1 11t11-9z" fill="#8a8a8a"/><g fill="#fff"><circle cx="7" cy="11" r="1.500"/><circle cx="12" cy="11" r="1.500"/><circle cx="17" cy="11" r="1.500"/></g></symbol>
    <symbol id="w-lock" viewBox="0 0 24 24"><path d="M7 12V5q0-4 5-4t5 4v7" fill="none" stroke="#999" stroke-width="2"/><rect x="5" y="12" width="14" height="11" rx="1" fill="#777"/></symbol>
    <symbol id="w-capture" viewBox="0 0 24 24"><circle cx="12" cy="13" r="9" fill="#ddd" stroke="#333" stroke-width="1.400"/><path d="M5 7l14 13M19 7L6 20M12 4v18" stroke="#444"/><path d="M20 2l2 2-3 3" fill="none" stroke="#333"/></symbol>
  </defs>
</svg>

<div class="frame">
  <div class="window">

    <div class="titlebar">
      <svg class="title-ico"><use href="#w-qgis"/></svg>
      <span class="title-text">QGIS 2.18.13 - 180607_Shanghai</span>
      <div class="win-btns">
        <span class="win-btn"><svg viewBox="0 0 24 24"><path d="M5 12h14" stroke="#111" stroke-width="1.200"/></svg></span>
        <span class="win-btn"><svg viewBox="0 0 24 24"><path d="M8 8V4h12v12h-4" fill="none" stroke="#111" stroke-width="1.500"/><rect x="4" y="8" width="12" height="12" fill="none" stroke="#111" stroke-width="2"/></svg></span>
        <span class="win-btn"><svg viewBox="0 0 24 24"><path d="M4 4l16 16M20 4L4 20" stroke="#111" stroke-width="1.300"/></svg></span>
      </div>
    </div>

    <div class="menubar">
      <span>Proyecto</span><span>Edición</span><span>Ver</span><span>Capa</span><span>Configuración</span><span>Complementos</span><span>Vectorial</span><span>Ráster</span><span>Base de datos</span><span>Web</span><span>Procesos</span><span>Ayuda</span>
    </div>

    <div class="toolbar">
      <i class="grip"></i>
      <span class="tb"><svg><use href="#i-new"/></svg></span>
      <span class="tb"><svg><use href="#i-open"/></svg></span>
      <span class="tb"><svg><use href="#i-save"/></svg></span>
      <span class="tb"><svg><use href="#i-saveas"/></svg></span>
      <span class="tb"><svg><use href="#i-newcomp"/></svg></span>
      <span class="tb"><svg><use href="#i-compmgr"/></svg></span>
      <i class="sep"></i>
      <span class="tb on"><svg><use href="#i-touch"/></svg></span>
      <span class="tb"><svg><use href="#i-pan"/></svg></span>
      <span class="tb"><svg><use href="#i-pansel"/></svg></span>
      <span class="tb"><svg><use href="#i-zin"/></svg></span>
      <span class="tb"><svg><use href="#i-zout"/></svg></span>
      <span class="tb"><svg><use href="#i-z11"/></svg></span>
      <span class="tb"><svg><use href="#i-zfull"/></svg></span>
      <span class="tb"><svg><use href="#i-zsel"/></svg></span>
      <span class="tb"><svg><use href="#i-zlayer"/></svg></span>
      <span class="tb"><svg><use href="#i-zlast"/></svg></span>
      <span class="tb"><svg><use href="#i-znext"/></svg></span>
      <span class="tb"><svg><use href="#i-bmnew"/></svg></span>
      <span class="tb"><svg><use href="#i-bm"/></svg></span>
      <span class="tb"><svg><use href="#i-refresh"/></svg></span>
      <i class="sep"></i>
      <span class="tb"><svg><use href="#i-ident"/></svg></span>
      <span class="tb"><svg><use href="#i-action"/></svg></span><b class="drop"></b>
      <span class="tb"><svg><use href="#i-select"/></svg></span><b class="drop"></b>
      <span class="tb"><svg><use href="#i-expr"/></svg></span><b class="drop"></b>
      <span class="tb"><svg><use href="#i-desel"/></svg></span>
      <span class="tb"><svg><use href="#i-table"/></svg></span>
      <span class="tb"><svg><use href="#i-calc"/></svg></span>
      <span class="tb"><svg><use href="#i-sigma"/></svg></span>
      <span class="tb"><svg><use href="#i-measure"/></svg></span><b class="drop"></b>
      <span class="tb"><svg><use href="#i-tip"/></svg></span>
      <span class="tb"><svg><use href="#i-text"/></svg></span><b class="drop"></b>
      <i class="sep"></i>
      <span class="tb"><svg><use href="#i-help"/></svg></span>
    </div>

    <div class="toolbar">
      <i class="grip"></i>
      <span class="tb"><svg><use href="#i-pencils"/></svg></span>
      <span class="tb"><svg><use href="#i-pencil"/></svg></span>
      <span class="tb"><svg><use href="#i-savegray"/></svg></span>
      <span class="tb"><svg><use href="#i-addfeat"/></svg></span>
      <span class="tb"><svg><use href="#i-nodeadd"/></svg></span><b class="drop drop-gray"></b>
      <span class="tb"><svg><use href="#i-movefeat"/></svg></span>
      <span class="tb"><svg><use href="#i-nodetool"/></svg></span>
      <span class="tb"><svg><use href="#i-trash"/></svg></span>
      <span class="tb"><svg><use href="#i-scissors"/></svg></span>
      <span class="tb"><svg><use href="#i-copy"/></svg></span>
      <span class="tb"><svg><use href="#i-paste"/></svg></span>
      <i class="sep sep-tight"></i>
      <span class="tb"><svg><use href="#i-abc"/></svg></span>
      <span class="tb"><svg><use href="#i-pie"/></svg></span>
      <span class="tb"><svg><use href="#i-abcsel"/></svg></span>
      <span class="tb"><svg><use href="#i-abcpin"/></svg></span>
      <span class="tb"><svg><use href="#i-abceye"/></svg></span>
      <span class="tb"><svg><use href="#i-abcmove"/></svg></span>
      <span class="tb"><svg><use href="#i-abcrot"/></svg></span>
      <span class="tb"><svg><use href="#i-abcedit"/></svg></span>
      <i class="sep"></i>
      <span class="tb"><svg><use href="#i-globeadd"/></svg></span>
      <span class="tb"><svg><use href="#i-globesrc"/></svg></span>
      <span class="tb"><svg><use href="#i-csw"/></svg></span>
      <i class="sep"></i>
      <span class="tb"><svg><use href="#i-python"/></svg></span>
    </div>

    <div class="toolbar toolbar-last">
      <i class="grip"></i>
      <span class="tb"><svg><use href="#i-mapnew"/></svg></span>
    </div>

    <div class="main">
      <div class="left-tools">
        <i class="grip-h"></i>
        <div class="lt"><svg><use href="#l-v"/></svg></div>
        <div class="lt"><svg><use href="#l-r"/></svg></div>
        <div class="lt"><svg><use href="#l-f"/></svg></div>
        <div class="lt"><svg><use href="#l-pg"/></svg><b class="drop"></b></div>
        <div class="lt"><svg><use href="#l-wms"/></svg><b class="drop"></b></div>
        <div class="lt"><svg><use href="#l-wcs"/></svg></div>
        <div class="lt"><svg><use href="#l-wfs"/></svg><b class="drop"></b></div>
        <div class="lt"><svg><use href="#l-txt"/></svg></div>
        <div class="lt"><svg><use href="#l-virt"/></svg></div>
        <div class="lt"><svg><use href="#l-vnew"/></svg><b class="drop"></b></div>
        <i class="grip-h grip-low"></i>
      </div>

      <div class="panels">
        <section class="dock dock-explorer">
          <div class="dock-title">
            <i class="grip-t"></i><span>Panel del explorador</span><i class="grip-t"></i>
            <span class="dock-btn"><svg viewBox="0 0 20 20"><path d="M8 6V3h9v9h-3" fill="none" stroke="#111" stroke-width="2"/><rect x="3" y="6" width="11" height="11" fill="none" stroke="#111" stroke-width="2"/><rect x="3" y="6" width="11" height="3" fill="#111"/></svg></span>
            <span class="dock-btn"><svg viewBox="0 0 20 20"><path d="M4 4l12 12M16 4L4 16" stroke="#111" stroke-width="3"/></svg></span>
          </div>
          <div class="dock-tools">
            <span class="dt"><svg><use href="#b-add"/></svg></span>
            <span class="dt"><svg><use href="#i-refresh"/></svg></span>
            <span class="dt"><svg><use href="#b-filter"/></svg></span>
            <span class="dt"><svg><use href="#b-collapse"/></svg></span>
            <span class="dt"><svg><use href="#i-info"/></svg></span>
          </div>
          <div class="tree tree-gray">
            <div class="rows">
              <div class="row"><u class="box"></u><svg class="ti"><use href="#t-folder"/></svg><span>Inicio del proyecto</span></div>
              <div class="row"><u class="box"></u><svg class="ti"><use href="#t-folder"/></svg><span>Inicio</span></div>
              <div class="row"><u class="twig"></u><svg class="ti"><use href="#t-star"/></svg><span>Favoritos</span></div>
              <div class="row"><u class="box"></u><svg class="ti"><use href="#t-folder"/></svg><span>C:/</span></div>
              <div class="row"><u class="twig"></u><svg class="ti"><use href="#t-db2"/></svg><span>DB2</span></div>
              <div class="row"><u class="twig"></u><svg class="ti"><use href="#t-mssql"/></svg><span>MSSQL</span></div>
              <div class="row"><u class="twig"></u><svg class="ti"><use href="#t-oracle"/></svg><span>Oracle</span></div>
              <div class="row"><u class="twig"></u><svg class="ti"><use href="#p-pg"/></svg><span>PostGIS</span></div>
              <div class="row"><u class="box"></u><svg class="ti"><use href="#p-feather"/></svg><span>SpatiaLite</span></div>
              <div class="row"><u class="twig"></u><svg class="ti"><use href="#t-arc"/></svg><span>ArcGisFeatureServer</span></div>
              <div class="row"><u class="twig"></u><svg class="ti"><use href="#t-arc"/></svg><span>ArcGisMapServer</span></div>
              <div class="row"><u class="twig"></u><svg class="ti"><use href="#p-globel"/></svg><span>OWS</span></div>
              <div class="row"><u class="twig"></u><svg class="ti"><use href="#p-globe"/></svg><span>Tile Server (XYZ)</span></div>
              <div class="row"><u class="twig"></u><svg class="ti"><use href="#p-globed"/></svg><span>WCS</span></div>
              <div class="row"><u class="twig"></u><svg class="ti"><use href="#p-globel"/></svg><span>WFS</span></div>
              <div class="row"><u class="twig"></u><svg class="ti"><use href="#p-globe"/></svg><span>WMS</span></div>
            </div>
          </div>
        </section>

        <i class="grip-split"></i>

        <section class="dock dock-layers">
          <div class="dock-title">
            <i class="grip-t"></i><span>Panel de capas</span><i class="grip-t"></i>
            <span class="dock-btn"><svg viewBox="0 0 20 20"><path d="M8 6V3h9v9h-3" fill="none" stroke="#111" stroke-width="2"/><rect x="3" y="6" width="11" height="11" fill="none" stroke="#111" stroke-width="2"/><rect x="3" y="6" width="11" height="3" fill="#111"/></svg></span>
            <span class="dock-btn"><svg viewBox="0 0 20 20"><path d="M4 4l12 12M16 4L4 16" stroke="#111" stroke-width="3"/></svg></span>
          </div>
          <div class="dock-tools">
            <span class="dt"><svg><use href="#b-brush"/></svg></span>
            <span class="dt"><svg><use href="#b-group"/></svg></span>
            <span class="dt"><svg><use href="#b-eye"/></svg></span>
            <span class="dt"><svg><use href="#b-filter"/></svg></span>
            <span class="dt dt-drop"><svg><use href="#b-exprg"/></svg><b class="drop"></b></span>
            <span class="dt"><svg><use href="#b-expand"/></svg></span>
            <span class="dt"><svg><use href="#b-collapse"/></svg></span>
            <span class="dt"><svg><use href="#b-rem"/></svg></span>
          </div>
          <div class="tree tree-blue">
            <div class="rows rows-layers">
              <div class="row layer"><u class="twig"></u><em class="check">✖</em><i class="swatch swatch-dot"></i><span>formulario</span></div>
              <div class="row layer"><u class="twig"></u><em class="check">✖</em><i class="swatch swatch-empty"></i><span>WFSServer-provincias Provincia MultiSurfa...</span></div>
              <div class="row layer selected"><u class="box"></u><em class="check">✖</em><i class="swatch swatch-blob"></i><span>WFSServer-departamentos Departamento ...</span></div>
            </div>
          </div>
        </section>
      </div>

      <div class="map">
        <svg viewBox="921 693 2229 1228">
          <defs>
            <filter id="rough" x="-3%" y="-3%" width="106%" height="106%">
              <feTurbulence type="fractalNoise" baseFrequency="0.16" numOctaves="2" seed="4"/>
              <feDisplacementMap in="SourceGraphic" scale="6" xChannelSelector="R" yChannelSelector="G"/>
            </filter>
          </defs>
          <g filter="url(#rough)">
            <g transform="translate(1380 700) scale(.5102 .4082)">
              <polygon class="dep c-loreto" points="728,95 745,97 778,85 800,90 820,115 840,125 870,155 880,190 905,225 945,255 975,280 985,335 1025,345 1030,390 1025,415 1050,438 1120,445 1150,430 1190,400 1240,425 1285,410 1320,425 1350,450 1395,480 1345,590 1320,645 1358,648 1385,690 1408,712 1400,728 1370,722 1305,700 1285,725 1215,750 1160,770 1110,810 1058,845 1045,920 1015,985 1025,1040 1000,1080 955,1110 950,1165 930,1195 880,1165 855,1170 855,1240 820,1280 790,1265 750,1300 725,1335 690,1370 670,1340 700,1270 660,1170 680,1100 740,1090 740,980 690,990 640,970 580,985 550,930 470,885 470,800 495,670 485,620 465,525 610,460 680,410 730,320 750,225 775,215 770,170 745,125"/>
              <polygon class="dep c-amazonas" points="465,525 485,620 495,670 470,800 475,890 480,960 510,985 545,1020 520,1060 515,1075 475,1075 470,1115 445,1105 440,1070 395,1000 360,960 380,880 365,810 365,720 400,590 440,560"/>
              <polygon class="dep c-sanmartin" points="470,885 550,930 580,985 640,970 690,990 740,980 742,1090 680,1100 660,1170 700,1270 690,1320 665,1380 650,1330 555,1350 570,1310 520,1275 505,1200 470,1115 475,1075 515,1075 545,1025 510,985 480,960"/>
              <polygon class="dep c-cajamarca" points="345,770 365,780 365,810 380,880 360,960 395,1000 440,1070 445,1105 470,1190 430,1235 345,1205 290,1170 290,1105 290,1070 270,1010 275,930 285,880 285,820 320,815"/>
              <polygon class="dep c-piura" points="50,710 85,695 140,705 155,745 180,720 250,745 270,805 295,825 285,880 275,965 225,915 210,905 160,960 130,1030 70,980 95,925 50,800 45,760"/>
              <polygon class="dep c-tumbes" points="85,670 135,670 145,690 125,705 85,695"/>
              <polygon class="dep c-tumbes" points="105,630 170,590 180,665 110,670"/>
              <polygon class="dep c-lambayeque" points="215,905 160,960 130,1030 205,1080 250,1140 290,1110 290,1070 270,1010 275,965 225,915"/>
              <polygon class="dep c-libertad" points="250,1140 290,1105 290,1170 345,1205 430,1235 470,1190 450,1115 470,1115 505,1200 520,1275 570,1310 555,1350 530,1345 500,1285 470,1285 420,1355 375,1410 350,1370 320,1290 270,1230 255,1175"/>
            </g>
            <g transform="translate(1500 1200) scale(.5102 .4329)">
              <polygon class="dep c-ucayali" points="620,-55 694,-28 720,10 770,120 810,195 780,245 885,255 905,325 1005,325 1085,250 1100,245 1080,330 1085,400 1000,460 900,465 890,510 860,525 800,500 750,510 745,440 715,435 695,480 620,450 665,405 635,330 640,300 610,240 620,125 600,120 550,190 530,210 500,235 455,145 470,110 515,70 540,60 590,35 610,0"/>
              <polygon class="dep c-huanuco" points="295,115 350,130 430,95 445,90 455,145 500,235 530,210 550,190 600,120 620,125 612,240 595,255 540,290 480,320 460,385 400,385 345,385 350,330 335,260 360,215 310,165 300,130"/>
              <polygon class="dep c-ancash" points="235,52 260,60 300,130 310,165 360,215 335,260 350,330 345,385 310,400 270,430 240,395 220,400 180,290 135,170 190,130"/>
              <polygon class="dep c-madre" points="1085,330 1085,460 1130,475 1205,460 1250,540 1310,685 1285,760 1195,795 1105,770 1050,765 1030,780 910,690 870,565 900,465 1000,460 1060,400"/>
              <polygon class="dep c-pasco" points="600,250 635,330 665,405 620,450 590,440 500,435 420,470 380,440 365,395 390,378 460,385 480,320 540,290"/>
              <polygon class="dep c-junin" points="390,475 420,470 500,435 590,440 620,450 695,480 715,435 745,440 750,510 735,560 755,610 725,650 650,640 620,605 560,615 540,650 470,605 430,600 400,530"/>
              <polygon class="dep c-lima" points="225,405 240,395 270,430 310,400 345,380 365,395 380,440 390,475 400,530 430,600 470,605 510,650 510,730 470,730 420,790 375,710 350,650 290,530 255,495 255,450"/>
              <polygon class="dep c-huanca" points="540,650 560,615 620,605 640,640 600,760 580,810 605,880 555,895 500,860 430,825 420,790 470,730 510,730 510,650"/>
              <polygon class="dep c-ica" points="420,825 500,860 555,895 560,965 590,990 605,1020 565,1070 555,1085 510,1040 470,980 440,920 420,880"/>
              <polygon class="dep c-cusco" points="735,560 800,505 860,525 890,510 870,565 910,690 1030,780 1050,765 1105,790 1070,850 1050,900 1030,970 1030,1095 1010,1035 950,1045 920,985 860,965 900,930 910,880 800,810 740,780 690,660 725,650 755,610"/>
              <polygon class="dep c-ayacucho" points="640,640 690,660 740,780 800,810 910,880 900,930 860,965 740,1000 690,1040 590,1040 590,990 560,965 555,895 605,880 580,810 600,760"/>
              <polygon class="dep c-apurimac" points="700,790 790,800 860,830 910,880 900,930 860,965 735,995 735,880 720,830"/>
              <polygon class="dep c-arequipa" points="565,1070 590,1040 690,1040 740,1000 860,965 920,985 950,1045 1010,1035 1030,1095 1050,1165 1030,1210 1000,1290 980,1345 880,1290 780,1220 650,1140"/>
              <polygon class="dep c-moquegua" points="1040,1175 1090,1180 1130,1240 1140,1290 1105,1310 1060,1345 1030,1410 985,1420 970,1345 1000,1290 1030,1210"/>
              <polygon class="dep c-puno" points="1105,770 1195,795 1285,760 1285,860 1265,870 1285,925 1250,970 1225,1040 1245,1070 1225,1105 1205,1190 1180,1190 1130,1205 1090,1180 1040,1175 1050,1165 1030,1095 1030,1000 1055,870 1105,790"/>
              <polygon class="dep c-puno" points="1130,1205 1205,1190 1280,1225 1255,1220 1255,1270 1200,1345 1140,1310 1130,1240"/>
              <polygon class="dep c-tacna" points="1100,1310 1140,1320 1200,1360 1195,1400 1165,1420 1165,1470 1120,1500 1085,1490 1040,1445 1010,1420 1030,1410 1060,1345"/>
              <polygon class="hole" points="1135,1050 1155,1050 1155,1062 1135,1060"/>
              <polygon class="hole" points="1165,1068 1195,1095 1205,1105 1180,1100"/>
              <polygon class="hole" points="422,458 438,456 446,478 430,480"/>
            </g>
            <!-- provincias -->
            <g transform="translate(1380 700) scale(.5102 .4082)">
              <path class="prov" d="M705,350 L770,378 L805,430 L800,550 L845,600 L900,650 L930,725 L985,735 L990,720M990,745 L920,815 L850,870 L745,930 L745,880 L720,825 L690,800 L650,720 L635,650 L655,610 L640,500 L620,455M720,825 L625,825 L585,895 L580,985M1015,820 L1030,770 L1100,720 L1135,640 L1140,590 L1090,520 L1130,495 L1220,540 L1340,590M990,745 L1060,840M740,985 L815,950 L835,970 L810,1050 L820,1110 L815,1165 L855,1170"/>
              <path class="prov" d="M480,900 L540,950 L560,1030 L590,1090 L620,1180 L610,1260M580,1000 L630,1060 L700,1040M600,1080 L680,1100M660,1170 L690,1300M510,1190 L550,1240 L600,1260M555,1030 L520,1080"/>
              <path class="prov prov-light" d="M365,765 L425,775 L430,840 L380,910 L395,1000M475,860 L430,880 L390,940M400,990 L470,960 L500,990 L480,1050M440,1000 L440,1070M285,880 L320,885 L370,880M275,965 L330,990 L380,960M290,1000 L400,1060M340,1080 L380,1120 L350,1200M380,1090 L430,1170M300,1100 L370,1150 L440,1180M430,1350 L480,1320 L500,1370 L560,1440M380,1400 L450,1400M420,1450 L440,1530"/>
              <path class="prov" d="M90,700 L95,770 L50,800M95,780 L135,800 L180,770 L195,800 L165,880 L100,880M265,810 L235,870 L225,910 L280,965M160,910 L210,940M225,1050 L220,1080 L280,1075 L290,1040M250,1140 L300,1190 L280,1230M320,1220 L370,1270 L360,1320 L420,1350M370,1290 L430,1280 L470,1285M470,1190 L510,1280"/>
            </g>
            <g transform="translate(1500 1200) scale(.5102 .4329)">
              <path class="prov prov-light" d="M190,130 L240,150 L300,130M150,200 L215,240M180,290 L250,330 L270,430M250,330 L330,300M300,130 L290,210 L335,260M330,150 L390,185 L440,170M340,260 L420,320 L470,310M400,250 L420,380M480,240 L470,320"/>
              <path class="prov" d="M640,290 L700,270 L780,300 L790,330M780,300 L890,270M870,350 L875,440 L910,465 L1000,460M870,350 L905,325M540,70 L580,140 L600,125M900,490 L1000,530 L1100,520 L1270,600M1120,640 L1150,695 L1100,760M900,480 L1010,560 L1040,600"/>
              <path class="prov" d="M400,480 L470,480 L480,440M470,480 L500,570 L560,570 L620,530 L600,440M540,500 L610,520M440,540 L500,570 L530,610M560,610 L540,650M260,450 L310,430 L320,460 L350,370M290,530 L340,520 L380,520 L400,550M260,470 L340,480M350,650 L430,600M440,800 L500,800 L580,760M500,860 L510,810 L560,790M430,880 L500,860M520,910 L520,960 L510,1010 L590,990"/>
              <path class="prov prov-light" d="M595,820 L640,860 L690,860 L730,950 L700,1000M620,880 L700,880M760,880 L790,850 L830,880 L800,940 L840,920M590,830 L610,880M700,1040 L680,1100 L680,1120M570,1040 L660,1060 L700,1110M740,1040 L800,1010 L790,1060 L735,1060M770,1100 L860,1050 L900,990M770,1120 L840,1240 L880,1250 L900,1130M810,1170 L840,1240M1010,1150 L920,1160 L900,1130M880,720 L920,680 L1000,740 L1030,780M880,720 L880,760 L970,780 L975,830 L1060,855M920,880 L970,930 L1000,1000 L1030,1000M880,870 L960,950 L940,1000"/>
              <path class="prov" d="M1195,795 L1180,900 L1240,950 L1240,1000M1060,900 L1120,920 L1175,900M1120,920 L1110,1010 L1040,1040M1050,1170 L1100,1070 L1200,1040M1130,1210 L1180,1280 L1200,1340M1205,1190 L1210,1280M1030,1200 L1070,1260 L1130,1240M1070,1260 L1060,1345M1100,1360 L1160,1350M1040,1430 L1110,1400 L1190,1400"/>
            </g>
          </g>
          <!-- formulario -->
          <g transform="translate(1380 700) scale(.5102 .4082)">
            <ellipse class="pt" cx="150" cy="610" rx="54" ry="68"/>
            <ellipse class="pt" cx="1010" cy="635" rx="54" ry="68"/>
            <ellipse class="pt" cx="125" cy="852" rx="54" ry="68"/>
            <ellipse class="pt" cx="380" cy="1145" rx="54" ry="68"/>
            <ellipse class="pt" cx="802" cy="1173" rx="54" ry="68"/>
          </g>
          <g transform="translate(1500 1200) scale(.5102 .4329)">
            <ellipse class="pt pt-mid" cx="263" cy="228" rx="55" ry="65"/>
            <ellipse class="pt pt-mid" cx="418" cy="313" rx="55" ry="65"/>
            <ellipse class="pt" cx="550" cy="385" rx="55" ry="65"/>
            <ellipse class="pt pt-full" cx="323" cy="610" rx="59" ry="65"/>
            <ellipse class="pt" cx="457" cy="668" rx="55" ry="65"/>
            <ellipse class="pt pt-full" cx="568" cy="715" rx="55" ry="65"/>
            <ellipse class="pt pt-mid" cx="657" cy="765" rx="55" ry="65"/>
            <ellipse class="pt" cx="920" cy="822" rx="55" ry="65"/>
            <ellipse class="pt" cx="790" cy="893" rx="55" ry="65"/>
            <ellipse class="pt pt-deep" cx="1143" cy="1152" rx="55" ry="65"/>
            <ellipse class="pt pt-mid" cx="965" cy="1225" rx="55" ry="65"/>
          </g>
          <g class="labels">
            <text x="1449" y="973">TUMBES</text>
            <text x="1463" y="1052">PIURA</text>
            <text x="1603" y="1047">AMAZONAS</text>
            <text x="1824" y="989">LORETO</text>
            <text x="1561" y="1129">CAJAMARCA</text>
            <text x="1685" y="1166">SAN MARTIN</text>
            <text x="1584" y="1221">LA LIBERTAD</text>
            <text x="1628" y="1311">ANCASH</text>
            <text x="1726" y="1311">HUANUCO</text>
            <text x="1883" y="1323">UCAYALI</text>
            <text x="1770" y="1370">PASCO</text>
            <text x="1797" y="1440">JUNIN</text>
            <text x="1691" y="1455">LIMA</text>
            <text x="2057" y="1469">MADRE DE DIOS</text>
            <text x="1789" y="1531">HUANCAVELICA</text>
            <text x="1958" y="1541">CUSCO</text>
            <text x="1843" y="1595">AYACUCHO</text>
            <text x="1754" y="1603">ICA</text>
            <text x="2088" y="1649">PUNO</text>
            <text x="1938" y="1703">AREQUIPA</text>
            <text x="2033" y="1765">MOQUEGUA</text>
            <text x="2065" y="1815">TACNA</text>
          </g>
        </svg>
      </div>
    </div>

    <div class="statusbar">
      <span class="msg">Eliminada una entrada de la leyenda.</span>
      <span class="st-coord">Coordenada</span>
      <span class="field field-coord">2652730,8834384</span>
      <svg class="st-ico st-cap"><use href="#w-capture"/></svg>
      <span class="st-scale">Escala</span>
      <span class="field field-combo">1:10.008.316<i class="arrowbox"></i></span>
      <svg class="st-ico st-lock"><use href="#w-lock"/></svg>
      <span class="st-mag">Amplificador</span>
      <span class="field field-spin st-magspin">100%<i class="spin"></i></span>
      <span class="st-rot">Rotación</span>
      <span class="field field-spin st-rotspin">0,0<i class="spin"></i></span>
      <em class="check check-st">✖</em>
      <span class="st-render">Representar</span>
      <svg class="st-ico st-crs"><use href="#w-crs"/></svg>
      <span class="st-epsg">EPSG:32718 (al vuelo)</span>
      <svg class="st-ico st-msg"><use href="#w-msg"/></svg>
    </div>

    <div class="taskbar">
      <span class="start"><svg viewBox="0 0 24 24"><path d="M2 5l9-1.300V11.500H2zM12.500 3.500L22 2v9.500h-9.500zM2 13h9v7.800l-9-1.300zM12.500 13H22v9l-9.500-1.500z" fill="#fff"/></svg></span>
      <div class="search">
        <i class="cortana"></i>
        <span>Escribe aquí para buscar</span>
        <svg class="mic" viewBox="0 0 24 24"><rect x="8.500" y="1" width="7" height="14" rx="3.500" fill="none" stroke="#222" stroke-width="1.600"/><path d="M5 11q0 7 7 7t7-7M12 18v5M8 23h8" fill="none" stroke="#222" stroke-width="1.600"/></svg>
      </div>
      <span class="task"><svg class="taskview" viewBox="0 0 24 24"><path d="M3 3h18M3 21h18" stroke="#fff" stroke-width="1.500"/><rect x="3" y="7" width="7" height="10" fill="none" stroke="#fff" stroke-width="1.500"/><rect x="14" y="7" width="7" height="10" fill="none" stroke="#fff" stroke-width="1.500"/></svg></span>
      <span class="task open"><svg><use href="#w-firefox"/></svg></span>
      <span class="task open"><svg><use href="#w-whats"/></svg></span>
      <span class="task"><b class="app app-ae">Ae</b></span>
      <span class="task open"><b class="app app-ps">Ps</b></span>
      <span class="task open"><b class="app app-ai">Ai</b></span>
      <span class="task open"><svg><use href="#w-acrobat"/></svg></span>
      <span class="task open active"><svg><use href="#w-qgis"/></svg></span>
      <span class="task open"><svg><use href="#w-folder"/></svg></span>
      <span class="task open"><svg><use href="#w-green"/></svg></span>
      <span class="task open"><svg><use href="#w-purple"/></svg></span>
      <div class="tray">
        <svg class="tr tr-person" viewBox="0 0 24 24"><circle cx="14" cy="7" r="3.500" fill="none" stroke="#fff" stroke-width="1.400"/><circle cx="7" cy="14" r="2.500" fill="none" stroke="#fff" stroke-width="1.400"/><path d="M9 23q0-9 5-9t6 9M3 23q0-4 4-4" fill="none" stroke="#fff" stroke-width="1.400"/></svg>
        <svg class="tr" viewBox="0 0 24 24"><path d="M5 15l7-7 7 7" fill="none" stroke="#fff" stroke-width="1.500"/></svg>
        <svg class="tr" viewBox="0 0 24 24"><path d="M7 3l5 3-5 3-5-3zM17 3l5 3-5 3-5-3zM7 10l5 3-5 3-5-3zM17 10l5 3-5 3-5-3zM12 16l5 3-5 3-5-3z" fill="#fff"/></svg>
        <svg class="tr" viewBox="0 0 24 24"><rect x="3" y="6" width="18" height="12" fill="none" stroke="#fff" stroke-width="1.500"/><rect x="6" y="9" width="8" height="6" fill="#fff"/></svg>
        <svg class="tr" viewBox="0 0 24 24"><path d="M3 9h4l5-5v16l-5-5H3z" fill="none" stroke="#fff" stroke-width="1.400"/><path d="M15 9l6 6M21 9l-6 6" stroke="#fff" stroke-width="1.400"/></svg>
        <svg class="tr" viewBox="0 0 24 24"><path d="M3 22q1-12 12-17M8 22q1-7 8-12M13 22q0-3 4-6" fill="none" stroke="#fff" stroke-width="1.600"/><path d="M18 16h4v6h-4z" fill="#aaa"/></svg>
        <div class="lang"><span>ESP</span><span>ES</span></div>
        <div class="clock"><span>0:34</span><span>04/07/2018</span></div>
        <span class="notif"><svg viewBox="0 0 24 24"><path d="M2 2h20v15H9l-5 5v-5H2z" fill="#fff"/><path d="M6 7h12M6 11h12" stroke="#3d2a0a" stroke-width="1.500"/></svg><b>1</b></span>
      </div>
    </div>

  </div>
</div>

</body>
</html>
```

FILE: styles.css

```css
* { box-sizing: border-box; }

html, body {
  margin: 0;
  padding: 0;
  background: #fff;
}

.sprite { position: absolute; width: 0; height: 0; }
.svg-b { font-family: "Liberation Sans", sans-serif; font-weight: 700; }
.svg-t { font-family: "Liberation Sans", sans-serif; }
.svg-serif { font-family: "Liberation Serif", serif; font-weight: 700; }

.frame {
  width: 3508px;
  height: 2480px;
  border: 3px solid #2f4a7c;
  display: flex;
  align-items: center;
  justify-content: center;
}

.window {
  width: 2800px;
  height: 1578px;
  display: flex;
  flex-direction: column;
  background: #efefef;
  font-family: "Noto Sans", sans-serif;
  font-size: 15px;
  color: #111;
  overflow: hidden;
}

/* title bar */
.titlebar {
  height: 38px;
  background: #fff;
  display: flex;
  align-items: center;
  padding-left: 4px;
}
.title-ico { width: 26px; height: 26px; }
.title-text { margin-left: 5px; font-size: 16px; }
.win-btns { margin-left: auto; display: flex; margin-right: 3px; }
.win-btn {
  width: 66px;
  height: 38px;
  display: flex;
  align-items: center;
  justify-content: center;
}
.win-btn svg { width: 20px; height: 20px; }

/* menu */
.menubar {
  height: 31px;
  border-bottom: 2px solid #c6c6c6;
  display: flex;
  align-items: center;
  gap: 21px;
  padding-left: 13px;
}

/* top toolbars */
.toolbar {
  height: 57px;
  display: flex;
  align-items: center;
  padding-top: 2px;
  border-bottom: 2px solid #c8c8c8;
}
.toolbar + .toolbar { height: 56px; }

.grip {
  width: 8px;
  height: 44px;
  margin: 0 0 0 8.500px;
  background-image: radial-gradient(#b8b8b8 1px, transparent 1.4px);
  background-size: 4px 5px;
  flex: none;
}
.tb {
  width: 51px;
  height: 46px;
  flex: none;
  display: flex;
  align-items: center;
  justify-content: center;
}
.tb svg { width: 35px; height: 35px; }
.tb.on {
  background: #d9d9d9;
  border: 2px solid #9a9a9a;
  border-radius: 3px;
}
.sep {
  width: 20.600px;
  height: 44px;
  flex: none;
  background-image: radial-gradient(#c0c0c0 1px, transparent 1.4px);
  background-size: 5px 5px;
  background-position: center;
  background-repeat: repeat-y;
}
.sep-tight { width: 18px; }
.drop {
  width: 0;
  height: 0;
  flex: none;
  margin: 0 7.500px 0 -.500px;
  border-left: 6px solid transparent;
  border-right: 6px solid transparent;
  border-top: 8px solid #111;
}
.drop-gray { border-top-color: #888; }

/* main area */
.main {
  flex: 1;
  display: flex;
  min-height: 0;
}

.left-tools {
  width: 75px;
  flex: none;
  border-right: 2px solid #c8c8c8;
  padding: 7px 0 0 7px;
  display: flex;
  flex-direction: column;
}
.grip-h {
  display: block;
  width: 60px;
  height: 8px;
  margin-bottom: 4px;
  background-image: radial-gradient(#b8b8b8 1px, transparent 1.4px);
  background-size: 5px 5px;
}
.grip-low { margin-top: 6px; }
.lt {
  height: 49.500px;
  display: flex;
  align-items: center;
  gap: 10px;
  padding-left: 4px;
}
.lt svg { width: 35px; height: 35px; flex: none; }
.lt .drop { margin: 0; }

.panels {
  width: 490px;
  flex: none;
  padding: 0 10px 0 2px;
  display: flex;
  flex-direction: column;
  position: relative;
}
.panels::after {
  content: "";
  position: absolute;
  right: 3px;
  top: 410px;
  bottom: 4px;
  width: 4px;
  background-image: radial-gradient(#bdbdbd 1px, transparent 1.400px);
  background-size: 4px 6px;
}
.dock { display: flex; flex-direction: column; }
.dock-explorer { height: 518px; }
.dock-layers { flex: 1; min-height: 0; }

.grip-split {
  display: block;
  flex: none;
  width: 150px;
  height: 8px;
  align-self: center;
  background-image: radial-gradient(#bdbdbd 1px, transparent 1.400px);
  background-size: 6px 8px;
}

.dock-title {
  height: 30px;
  display: flex;
  align-items: center;
  font-size: 12.600px;
  gap: 10px;
}
.dock-title span:first-of-type { flex: none; }
.grip-t {
  flex: 1;
  height: 9px;
  background-image: radial-gradient(#b8b8b8 1px, transparent 1.400px);
  background-size: 5px 5px;
}
.dock-btn {
  width: 20px;
  height: 20px;
  flex: none;
  margin-left: -7px;
  border: 1px solid #888;
  border-radius: 3px;
  background: #f4f4f4;
}
.dock-btn svg { display: block; width: 18px; height: 18px; }

.dock-tools {
  height: 46px;
  display: flex;
  align-items: center;
  padding-left: 1px;
}
.dt {
  width: 40px;
  height: 40px;
  flex: none;
  display: flex;
  align-items: center;
  justify-content: center;
}
.dt svg { width: 24px; height: 24px; }
.dt-drop { width: 56px; gap: 9px; }
.dt-drop .drop { margin: 0; }

.tree {
  flex: 1;
  min-height: 0;
  background: #fff;
  border-radius: 3px;
  position: relative;
}
.tree-gray { border: 2px solid #c4c4c4; }
.tree-blue { border: 2px solid #2c86d8; }

.rows {
  padding-top: 3px;
  position: relative;
}
.rows::before {
  content: "";
  position: absolute;
  left: 14px;
  top: 3px;
  height: 350px;
  border-left: 2px dotted #a8a8a8;
}
.rows-layers { padding-top: 2px; }
.rows-layers::before { height: 50px; top: 0; }

.row {
  height: 23.400px;
  display: flex;
  align-items: center;
  font-size: 14.800px;
  position: relative;
  white-space: nowrap;
}
.row u { display: block; flex: none; text-decoration: none; }
.twig {
  width: 14px;
  margin-left: 15px;
  border-top: 1px dotted #999;
}
.box {
  width: 12px;
  height: 12px;
  margin: 0 8px 0 8px;
  background: #fff;
  border: 1px solid #888;
  position: relative;
  z-index: 1;
}
.box::before, .box::after {
  content: "";
  position: absolute;
  background: #666;
}
.box::before { left: 2px; right: 2px; top: 4px; height: 1px; }
.box::after { top: 2px; bottom: 2px; left: 4px; width: 1px; }
.ti { width: 24px; height: 24px; margin-left: 6px; flex: none; }
.row > span { margin-left: 6px; }

.check {
  width: 20px;
  height: 20px;
  flex: none;
  margin-left: 3px;
  background: #fff;
  border: 1px solid #bbb;
  font-style: normal;
  font-size: 19px;
  line-height: 18px;
  text-align: center;
  color: #000;
}
.swatch {
  width: 22px;
  height: 22px;
  flex: none;
  margin-left: 9px;
}
.swatch-dot { background: #dff7c4; border-radius: 50%; }
.swatch-empty { background: #fff; border: 1px dashed #ccc; }
.swatch-blob { background: #7ea6d0; border-radius: 6px 10px 4px 10px; height: 14px; }
.layer > span { margin-left: 9px; font-weight: 700; font-size: 16.300px; }
.selected { background: #0a72c9; color: #fff; }
.selected > span {
  text-decoration: underline;
  outline: 1px dotted #f0a040;
  outline-offset: -1px;
  flex: 1;
  margin-left: 8px;
}

.map {
  flex: 1;
  min-width: 0;
  margin: 2px 2px 2px 0;
  border: 2px solid #c8c8c8;
  border-radius: 3px;
  background: #fff;
}
.map svg { display: block; width: 100%; height: 100%; }

/* map symbology */
.dep { stroke-width: 2.500px; vector-effect: non-scaling-stroke; stroke-linejoin: round; }
.c-loreto { fill: #379fbd; stroke: #379fbd; }
.c-amazonas { fill: #feffd0; stroke: #feffd0; }
.c-sanmartin { fill: #2862ab; stroke: #2862ab; }
.c-cajamarca { fill: #b0dfb9; stroke: #b0dfb9; }
.c-piura { fill: #2a79b6; stroke: #2a79b6; }
.c-tumbes { fill: #2540a0; stroke: #2540a0; }
.c-lambayeque { fill: #3faec1; stroke: #3faec1; }
.c-libertad { fill: #42b4c4; stroke: #42b4c4; }
.c-ancash { fill: #eef8c4; stroke: #eef8c4; }
.c-huanuco { fill: #78c7b8; stroke: #78c7b8; }
.c-ucayali { fill: #263d9b; stroke: #263d9b; }
.c-madre { fill: #3394bf; stroke: #3394bf; }
.c-pasco { fill: #2e86bb; stroke: #2e86bb; }
.c-junin { fill: #56bcc0; stroke: #56bcc0; }
.c-lima { fill: #3aa3c0; stroke: #3aa3c0; }
.c-huanca { fill: #81ccb9; stroke: #81ccb9; }
.c-ica { fill: #60bfbb; stroke: #60bfbb; }
.c-cusco { fill: #92d3b5; stroke: #92d3b5; }
.c-ayacucho { fill: #c0e6bc; stroke: #c0e6bc; }
.c-apurimac { fill: #e9f6c3; stroke: #e9f6c3; }
.c-arequipa { fill: #d3edc0; stroke: #d3edc0; }
.c-moquegua { fill: #2f86bb; stroke: #2f86bb; }
.c-puno { fill: #2a6db3; stroke: #2a6db3; }
.c-tacna { fill: #2752a3; stroke: #2752a3; }
.hole { fill: #fff; }

.prov {
  fill: none;
  stroke: #101a24;
  stroke-width: 1.800px;
  stroke-dasharray: 2.500 2.500;
  vector-effect: non-scaling-stroke;
}
.prov-light { stroke: #4a4a4a; }

.pt {
  fill: rgba(174, 255, 85, .25);
  stroke: #a4f04a;
  stroke-width: 2.500px;
  vector-effect: non-scaling-stroke;
}
.pt-mid { fill: rgba(174, 255, 85, .42); }
.pt-deep { fill: rgba(174, 255, 85, .6); }
.pt-full { fill: rgba(174, 255, 85, .88); }

.labels text {
  font-family: "DejaVu Sans", sans-serif;
  font-size: 13.500px;
  text-anchor: middle;
  fill: #111;
}

/* status bar */
.statusbar {
  height: 45px;
  display: flex;
  align-items: center;
  padding-left: 8px;
  font-size: 14.300px;
  white-space: nowrap;
}
.statusbar > * { flex: none; }
.msg { width: 1238px; }
.st-coord { width: 85px; }
.field {
  height: 31px;
  background: #fff;
  border: 2px solid #cfcfcf;
  border-radius: 3px;
  display: flex;
  align-items: center;
  padding-left: 7px;
  position: relative;
}
.field-coord { width: 365px; margin-left: 8px; justify-content: center; }
.st-ico { width: 28px; height: 28px; }
.st-cap { margin-left: 8px; }
.st-scale { width: 42px; margin-left: 18px; }
.field-combo { width: 127px; margin-left: 9px; padding-left: 3px; }
.st-lock { width: 20px; margin-left: 8px; }
.st-mag { width: 87px; margin-left: 22px; }
.field-spin { width: 111px; }
.st-magspin { margin-left: 5px; }
.st-rot { width: 62px; margin-left: 12px; }
.st-rotspin { margin-left: 14px; }
.check-st { margin-left: 8px; }
.st-render { width: 87px; margin-left: 6px; }
.st-crs { width: 26px; margin-left: 25px; }
.st-epsg { width: 153px; margin-left: 7px; }
.st-msg { width: 26px; margin-left: 33px; }
.arrowbox {
  position: absolute;
  right: 0;
  top: 0;
  bottom: 0;
  width: 22px;
  background: #dcdcdc;
}
.arrowbox::after {
  content: "";
  position: absolute;
  left: 6px;
  top: 11px;
  border-left: 5px solid transparent;
  border-right: 5px solid transparent;
  border-top: 6px solid #111;
}
.spin {
  position: absolute;
  right: 0;
  top: 0;
  bottom: 0;
  width: 22px;
  background: #ececec;
  border-left: 1px solid #ccc;
}
.spin::before, .spin::after {
  content: "";
  position: absolute;
  left: 6px;
  border-left: 5px solid transparent;
  border-right: 5px solid transparent;
}
.spin::before { top: 4px; border-bottom: 6px solid #111; }
.spin::after { bottom: 4px; border-top: 6px solid #111; }

/* taskbar */
.taskbar {
  height: 58px;
  background: #3d2a0a;
  display: flex;
  align-items: stretch;
  color: #fff;
}
.start {
  width: 70px;
  flex: none;
  display: flex;
  align-items: center;
  justify-content: center;
}
.start svg { width: 28px; height: 28px; }
.search {
  width: 502px;
  flex: none;
  background: #f2f2f2;
  color: #444;
  display: flex;
  align-items: center;
  font-size: 20px;
  padding-left: 16px;
}
.cortana {
  width: 30px;
  height: 30px;
  border: 4px solid #222;
  border-radius: 50%;
  margin-right: 14px;
  flex: none;
}
.mic { width: 24px; height: 28px; margin-left: auto; margin-right: 18px; }
.task {
  width: 71.500px;
  flex: none;
  display: flex;
  align-items: center;
  justify-content: center;
  position: relative;
}
.task svg { width: 36px; height: 40px; }
.task .taskview { width: 26px; height: 28px; }
.task.open::after {
  content: "";
  position: absolute;
  left: 6px;
  right: 6px;
  bottom: 0;
  height: 3px;
  background: #6ab4e8;
}
.task.active { background: #6b5a3a; }
.task.active::after { left: 0; right: 0; }
.app {
  width: 34px;
  height: 34px;
  display: flex;
  align-items: center;
  justify-content: center;
  font-family: "Liberation Sans", sans-serif;
  font-size: 18px;
  border: 2px solid;
  background: #1c1430;
}
.app-ae { color: #c9a2f0; border-color: #b07ae8; }
.app-ps { color: #7cc4f8; border-color: #5aa8ec; background: #0c2238; }
.app-ai { color: #f8a428; border-color: #f09a1c; background: #2c1a04; }

.tray {
  margin-left: auto;
  display: flex;
  align-items: center;
  padding-right: 30px;
  font-size: 16.300px;
}
.tr { width: 24px; height: 26px; margin-right: 11px; flex: none; }
.tr-person { margin-right: 28px; }
.lang, .clock {
  display: flex;
  flex-direction: column;
  align-items: center;
  gap: 6px;
  line-height: 20px;
}
.lang { margin-left: 5px; margin-right: 21px; font-size: 15px; }
.clock { margin-right: 26px; }
.notif { position: relative; width: 30px; height: 44px; display: block; }
.notif svg { width: 26px; height: 28px; display: block; }
.notif b {
  position: absolute;
  right: -3px;
  bottom: -2px;
  width: 22px;
  height: 22px;
  border-radius: 50%;
  background: #333;
  border: 2px solid #aaa;
  text-align: center;
  line-height: 18px;
  font-size: 13px;
}
```
